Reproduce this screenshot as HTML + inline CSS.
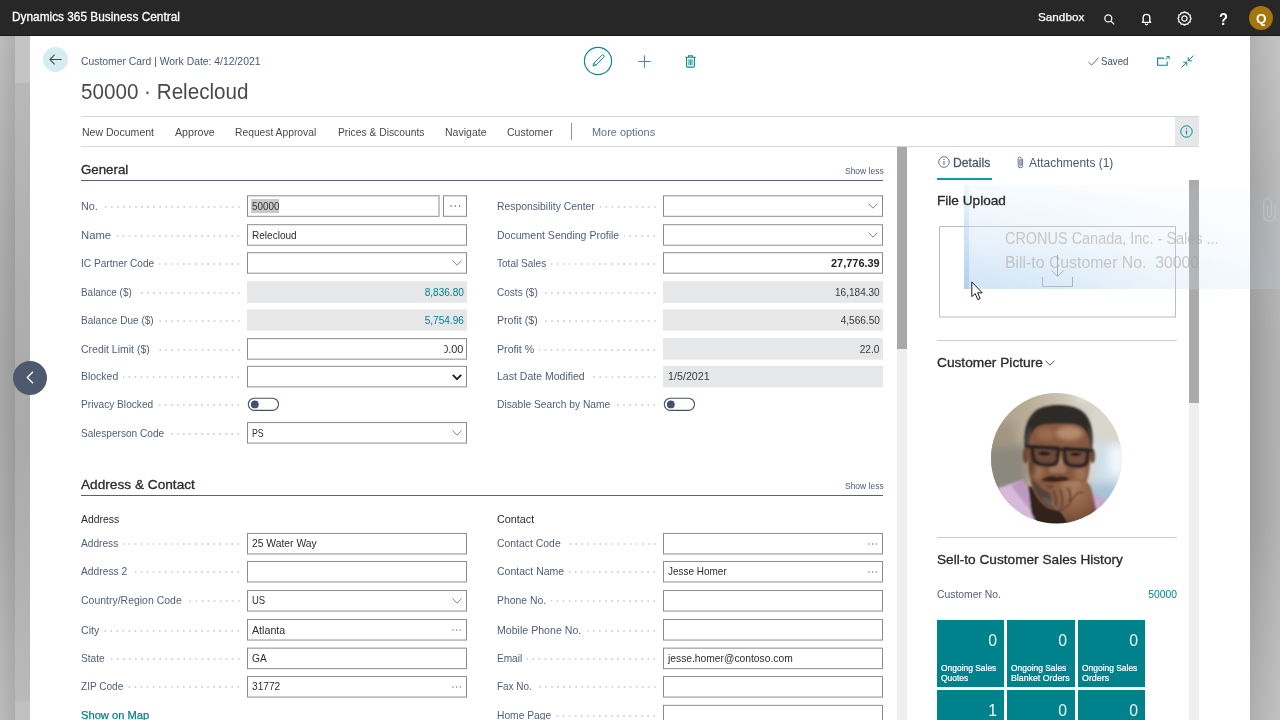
<!DOCTYPE html>
<html lang="en"><head><meta charset="utf-8"><title>Customer Card - 50000 Relecloud</title>
<style>
html,body{margin:0;padding:0}
body{width:1280px;height:720px;overflow:hidden;position:relative;background:#b0b0b0;font-family:"Liberation Sans",sans-serif}
.a{position:absolute}
.t{position:absolute;white-space:nowrap;line-height:1;transform-origin:0 0}
.bx{position:absolute;box-sizing:border-box;border:1px solid #969696;background:#fff}
.ro{position:absolute;background:#e6e7e9}
.hl{position:absolute;height:1px;background:#d4d8dd}
.sec{position:absolute;height:2px;background:#54627b}
.dots{position:absolute;height:2px;background-image:radial-gradient(circle at 1px 1px,#d0d5db 0.7px,transparent 1.05px);background-size:6.05px 2px;background-repeat:repeat-x;background-position:right top}
.tile{position:absolute;width:67px;height:67px;background:#00828d}
svg{position:absolute;overflow:visible}
</style></head><body>
<div class="a" style="left:0;top:36px;width:15px;height:684px;background:linear-gradient(90deg,rgba(255,255,255,.06),rgba(0,0,0,.05)),linear-gradient(180deg,#b8b8b8 0,#a8a8a8 28%,#a2a2a2 48%,#a5a5a5 70%,#b7b7b7 100%)"></div>
<div class="a" style="left:15px;top:36px;width:15px;height:684px;background:linear-gradient(180deg,#bababa 0,#aeaeae 40%,#aaaaaa 58%,#b2b2b2 80%,#bbbbbb 100%)"></div>
<div class="a" style="left:15px;top:36px;width:15px;height:47px;background:#c4c4c4"></div>
<div class="a" style="left:15px;top:701px;width:15px;height:19px;background:#c0c0c0"></div>
<div class="a" style="left:1250px;top:36px;width:30px;height:684px;background:linear-gradient(90deg,rgba(255,255,255,0),rgba(255,255,255,.24)),linear-gradient(180deg,#b2b2b2 0,#a2a2a2 25%,#9b9b9b 50%,#9d9d9d 72%,#afafaf 100%)"></div>
<div class="a" style="left:30px;top:36px;width:1220px;height:684px;background:#fff"></div>
<div class="a" style="left:0;top:0;width:1280px;height:36px;box-sizing:border-box;border-bottom:1px solid #1a1a1a;background:#272727"></div>
<svg style="left:1103.5px;top:13.5px" width="11" height="11" viewBox="0 0 11 11" fill="none" stroke="#fff" stroke-width="1.25"><circle cx="4.3" cy="4.4" r="3.5"/><path d="M6.9 7.1 L10.2 10.4"/></svg>
<svg style="left:1141px;top:12.8px" width="11" height="12" viewBox="0 0 11 12" fill="none" stroke="#fff" stroke-width="1.35" stroke-linejoin="round"><path d="M2.2 8.6 V4.6 a3.3 3.3 0 0 1 6.6 0 V8.6 l0.9 0.7 H1.3 Z"/><path d="M4.3 10.6 a1.2 1.2 0 0 0 2.4 0" stroke-width="1.2"/></svg>
<svg style="left:1177px;top:11px" width="15" height="15" viewBox="-7.5 -7.5 15 15" fill="none" stroke="#fff" stroke-width="1.3"><circle r="2.6"/><path d="M0-6.6 L1.6-5.6 L3.3-5.7 L4-4 L5.7-3.3 L5.6-1.6 L6.6 0 L5.6 1.6 L5.7 3.3 L4 4 L3.3 5.7 L1.6 5.6 L0 6.6 L-1.6 5.6 L-3.3 5.7 L-4 4 L-5.7 3.3 L-5.6 1.6 L-6.6 0 L-5.6-1.6 L-5.7-3.3 L-4-4 L-3.3-5.7 L-1.6-5.6 Z" stroke-linejoin="round"/></svg>
<div class="a" style="left:1248.7px;top:5.7px;width:24.4px;height:24.4px;border-radius:50%;background:#a4770e"></div>
<div class="a" style="left:43px;top:47px;width:25px;height:25px;border-radius:50%;background:#d4edf0"></div>
<svg style="left:49px;top:54px" width="13" height="11" viewBox="0 0 13 11" fill="none" stroke="#4b4b4b" stroke-width="1.1"><path d="M12.5 5.5 H1 M5.6 0.6 L0.9 5.5 L5.6 10.4"/></svg>
<svg style="left:583px;top:46px" width="30" height="30" viewBox="0 0 30 30" fill="none" stroke="#0b8793" stroke-width="1.2"><circle cx="15" cy="15" r="13.6"/><path d="M10 20 L10.9 17.2 L18.8 9.3 a1.4 1.4 0 0 1 2 2 L12.9 19.2 Z M10.9 17.2 L12.9 19.2" stroke-width="1"/></svg>
<svg style="left:638px;top:55px" width="13" height="13" viewBox="0 0 13 13" fill="none" stroke="#2a9aa4" stroke-width="1"><path d="M6.5 0.3 V12.7 M0.3 6.5 H12.7"/></svg>
<svg style="left:685px;top:54.5px" width="11" height="13" viewBox="0 0 11 13" fill="none" stroke="#0b8793" stroke-width="1.1"><path d="M0.3 2.2 H10.7 M3.6 2 V0.8 H7.4 V2 M1.6 2.4 V11.2 a0.9 0.9 0 0 0 0.9 0.9 H8.5 a0.9 0.9 0 0 0 0.9 -0.9 V2.4"/><path d="M4 4.3 V10.3 M5.5 4.3 V10.3 M7 4.3 V10.3" stroke-width="1.2" stroke="#3fa3ac"/></svg>
<svg style="left:1088px;top:56.5px" width="11" height="9" viewBox="0 0 11 9" fill="none" stroke="#6a6a6a" stroke-width="1"><path d="M0.4 5 L3.6 8.2 L10.6 0.6"/></svg>
<svg style="left:1156.5px;top:55.5px" width="13" height="10" viewBox="0 0 13 10" fill="none" stroke="#0b8793" stroke-width="1.1"><path d="M7.3 2.1 H0.6 V9.3 H10.2 V5.6"/><path d="M8.6 3.6 L12 0.6 M9.4 0.5 H12.2 V3.2" stroke-width="0.9"/></svg>
<svg style="left:1180.5px;top:54.5px" width="13" height="13" viewBox="0 0 13 13" fill="none" stroke="#0b8793" stroke-width="1"><path d="M12.4 0.6 L7.4 5.6 M7.2 2.2 V5.8 H10.8 M0.6 12.4 L5.6 7.4 M2.2 7.2 H5.8 V10.8"/></svg>
<div class="hl" style="left:81px;top:116px;width:1118px"></div>
<div class="hl" style="left:81px;top:146px;width:1118px"></div>
<div class="a" style="left:1175px;top:117px;width:24px;height:29px;background:#e5e7e9"></div>
<svg style="left:1180px;top:125px" width="13" height="13" viewBox="0 0 13 13" fill="none" stroke="#0b8793" stroke-width="1"><circle cx="6.5" cy="6.5" r="5.7"/><path d="M6.5 5.4 V9.6 M6.5 3.2 V4.3" stroke-width="1.1"/></svg>
<div class="a" style="left:571px;top:123px;width:1px;height:17px;background:#8a95a6"></div>
<div class="a" style="left:897px;top:147px;width:10px;height:573px;background:#efefef"></div>
<div class="a" style="left:897px;top:147px;width:10px;height:202px;background:#a8a8a8"></div>
<div class="a" style="left:1189px;top:180px;width:10px;height:540px;background:#efefef"></div>
<div class="a" style="left:1189px;top:180px;width:10px;height:223px;background:#ababab"></div>
<svg style="left:0;top:0" width="1280" height="720" viewBox="0 0 1280 720"><rect x="247.50" y="195.80" width="191.50" height="20.50" fill="#fff" stroke="#8c8c8c"/><rect x="443.50" y="195.80" width="23.00" height="20.50" fill="#fff" stroke="#8c8c8c"/><rect x="247.50" y="224.70" width="219.00" height="20.50" fill="#fff" stroke="#8c8c8c"/><rect x="247.50" y="252.70" width="219.00" height="20.50" fill="#fff" stroke="#8c8c8c"/><rect x="247.00" y="281.30" width="220.00" height="21.50" fill="#e6e7e9"/><rect x="247.00" y="309.25" width="220.00" height="21.50" fill="#e6e7e9"/><rect x="247.50" y="338.65" width="219.00" height="20.50" fill="#fff" stroke="#8c8c8c"/><rect x="247.50" y="366.35" width="219.00" height="20.50" fill="#fff" stroke="#8c8c8c"/><rect x="248.30" y="398.20" width="30.2" height="12.2" rx="6.1" fill="#fff" stroke="#44526b" stroke-width="1.1"/><circle cx="254.8" cy="404.40" r="3.9" fill="#44526b"/><rect x="247.50" y="422.60" width="219.00" height="20.50" fill="#fff" stroke="#8c8c8c"/><rect x="663.50" y="195.80" width="219.00" height="20.50" fill="#fff" stroke="#8c8c8c"/><rect x="663.50" y="224.70" width="219.00" height="20.50" fill="#fff" stroke="#8c8c8c"/><rect x="663.50" y="252.70" width="219.00" height="20.50" fill="#fff" stroke="#8c8c8c"/><rect x="663.00" y="281.30" width="220.00" height="21.50" fill="#e6e7e9"/><rect x="663.00" y="309.25" width="220.00" height="21.50" fill="#e6e7e9"/><rect x="663.00" y="338.15" width="220.00" height="21.50" fill="#e6e7e9"/><rect x="663.00" y="365.85" width="220.00" height="21.50" fill="#e6e7e9"/><rect x="664.30" y="398.20" width="30.2" height="12.2" rx="6.1" fill="#fff" stroke="#44526b" stroke-width="1.1"/><circle cx="670.8" cy="404.40" r="3.9" fill="#44526b"/><rect x="247.50" y="533.45" width="219.00" height="20.50" fill="#fff" stroke="#8c8c8c"/><rect x="247.50" y="561.45" width="219.00" height="20.50" fill="#fff" stroke="#8c8c8c"/><rect x="247.50" y="590.55" width="219.00" height="20.50" fill="#fff" stroke="#8c8c8c"/><rect x="247.50" y="619.55" width="219.00" height="20.50" fill="#fff" stroke="#8c8c8c"/><rect x="247.50" y="648.15" width="219.00" height="20.50" fill="#fff" stroke="#8c8c8c"/><rect x="247.50" y="676.55" width="219.00" height="20.50" fill="#fff" stroke="#8c8c8c"/><rect x="663.50" y="533.45" width="219.00" height="20.50" fill="#fff" stroke="#8c8c8c"/><rect x="663.50" y="561.45" width="219.00" height="20.50" fill="#fff" stroke="#8c8c8c"/><rect x="663.50" y="590.55" width="219.00" height="20.50" fill="#fff" stroke="#8c8c8c"/><rect x="663.50" y="619.55" width="219.00" height="20.50" fill="#fff" stroke="#8c8c8c"/><rect x="663.50" y="648.15" width="219.00" height="20.50" fill="#fff" stroke="#8c8c8c"/><rect x="663.50" y="676.55" width="219.00" height="20.50" fill="#fff" stroke="#8c8c8c"/><rect x="663.50" y="705.35" width="219.00" height="20.50" fill="#fff" stroke="#8c8c8c"/><rect x="939.50" y="226.50" width="236.00" height="90.50" fill="#fff" stroke="#bdbdbd"/></svg>
<div class="sec" style="left:81px;top:179.8px;width:802px;height:1.5px"></div>
<div class="dots" style="left:102.5px;top:206px;width:140.9px"></div>
<svg style="left:449.6px;top:205.45px" width="10" height="2" viewBox="0 0 10 2" fill="#555"><circle cx="1" cy="1" r="0.8"/><circle cx="5.3" cy="1" r="0.8"/><circle cx="9.6" cy="1" r="0.8"/></svg>
<div class="a" style="left:251.2px;top:199.05px;width:28.3px;height:13.6px;background:#c9c9c9"></div>
<div class="dots" style="left:115.9px;top:235px;width:127.5px"></div>
<div class="dots" style="left:159.0px;top:263px;width:84.4px"></div>
<svg style="left:452px;top:260.25px" width="10" height="6" viewBox="0 0 10 6" fill="none" stroke="#838383" stroke-width="1"><path d="M0.5 0.6 L5 5.2 L9.5 0.6"/></svg>
<div class="dots" style="left:136.5px;top:292px;width:106.9px"></div>
<div class="dots" style="left:158.5px;top:320px;width:84.9px"></div>
<div class="dots" style="left:154.5px;top:349px;width:88.9px"></div>
<div class="dots" style="left:123.0px;top:376px;width:120.4px"></div>
<svg style="left:452px;top:374.00px" width="10" height="7" viewBox="0 0 10 7" fill="none" stroke="#222" stroke-width="1.9"><path d="M0.8 0.9 L5 5.2 L9.2 0.9"/></svg>
<div class="dots" style="left:158.0px;top:404px;width:85.4px"></div>
<div class="dots" style="left:169.0px;top:433px;width:74.4px"></div>
<svg style="left:452px;top:430.15px" width="10" height="6" viewBox="0 0 10 6" fill="none" stroke="#838383" stroke-width="1"><path d="M0.5 0.6 L5 5.2 L9.5 0.6"/></svg>
<div class="dots" style="left:599.5px;top:206px;width:59.9px"></div>
<svg style="left:868px;top:203.35px" width="10" height="6" viewBox="0 0 10 6" fill="none" stroke="#838383" stroke-width="1"><path d="M0.5 0.6 L5 5.2 L9.5 0.6"/></svg>
<div class="dots" style="left:624.0px;top:235px;width:35.4px"></div>
<svg style="left:868px;top:232.25px" width="10" height="6" viewBox="0 0 10 6" fill="none" stroke="#838383" stroke-width="1"><path d="M0.5 0.6 L5 5.2 L9.5 0.6"/></svg>
<div class="dots" style="left:551.0px;top:263px;width:108.4px"></div>
<div class="dots" style="left:542.5px;top:292px;width:116.9px"></div>
<div class="dots" style="left:542.5px;top:320px;width:116.9px"></div>
<div class="dots" style="left:539.0px;top:349px;width:120.4px"></div>
<div class="dots" style="left:589.5px;top:376px;width:69.9px"></div>
<div class="dots" style="left:615.0px;top:404px;width:44.4px"></div>
<div class="sec" style="left:81px;top:494.8px;width:802px;height:1.5px"></div>
<div class="dots" style="left:123.0px;top:543px;width:120.4px"></div>
<div class="dots" style="left:132.0px;top:571px;width:111.4px"></div>
<div class="dots" style="left:186.5px;top:600px;width:56.9px"></div>
<svg style="left:452px;top:598.10px" width="10" height="6" viewBox="0 0 10 6" fill="none" stroke="#838383" stroke-width="1"><path d="M0.5 0.6 L5 5.2 L9.5 0.6"/></svg>
<div class="dots" style="left:104.0px;top:630px;width:139.4px"></div>
<svg style="left:451.5px;top:629.40px" width="10" height="2" viewBox="0 0 10 2" fill="#7a7a7a"><circle cx="1" cy="1" r="0.75"/><circle cx="4.6" cy="1" r="0.75"/><circle cx="8.2" cy="1" r="0.75"/></svg>
<div class="dots" style="left:109.5px;top:658px;width:133.9px"></div>
<div class="dots" style="left:128.0px;top:686px;width:115.4px"></div>
<svg style="left:451.5px;top:686.40px" width="10" height="2" viewBox="0 0 10 2" fill="#7a7a7a"><circle cx="1" cy="1" r="0.75"/><circle cx="4.6" cy="1" r="0.75"/><circle cx="8.2" cy="1" r="0.75"/></svg>
<div class="dots" style="left:565.5px;top:543px;width:93.9px"></div>
<svg style="left:867.5px;top:543.30px" width="10" height="2" viewBox="0 0 10 2" fill="#7a7a7a"><circle cx="1" cy="1" r="0.75"/><circle cx="4.6" cy="1" r="0.75"/><circle cx="8.2" cy="1" r="0.75"/></svg>
<div class="dots" style="left:569.0px;top:571px;width:90.4px"></div>
<svg style="left:867.5px;top:571.30px" width="10" height="2" viewBox="0 0 10 2" fill="#7a7a7a"><circle cx="1" cy="1" r="0.75"/><circle cx="4.6" cy="1" r="0.75"/><circle cx="8.2" cy="1" r="0.75"/></svg>
<div class="dots" style="left:551.0px;top:600px;width:108.4px"></div>
<div class="dots" style="left:586.0px;top:630px;width:73.4px"></div>
<div class="dots" style="left:527.0px;top:658px;width:132.4px"></div>
<div class="dots" style="left:536.5px;top:686px;width:122.9px"></div>
<div class="dots" style="left:556.0px;top:715px;width:103.4px"></div>
<svg style="left:937.5px;top:155.5px" width="12" height="12" viewBox="0 0 12 12" fill="none" stroke="#5a6578" stroke-width="0.9"><circle cx="6" cy="6" r="5.3"/><path d="M6 5 V9 M6 3 V4" stroke-width="1"/></svg>
<div class="a" style="left:937px;top:177.6px;width:55px;height:2.2px;background:#0f9aa6"></div>
<svg style="left:1016.7px;top:155.5px" width="7" height="13" viewBox="0 0 7 13" fill="none" stroke="#6a7488" stroke-width="1"><path d="M5.6 3 V9.6 a2.2 2.2 0 0 1 -4.4 0 V2.6 a1.5 1.5 0 0 1 3 0 V9.2 a0.7 0.7 0 0 1 -1.4 0 V3.4"/></svg>
<svg style="left:1041.5px;top:255px" width="31" height="33" viewBox="0 0 31 33" fill="none" stroke="#8b8b8b" stroke-width="1"><path d="M15.5 0 V21 M9.5 15.5 L15.5 21.5 L21.5 15.5 M0.5 22 V31.5 H30.5 V22"/></svg>
<div class="hl" style="left:937px;top:340px;width:240px;background:#c9ced6"></div>
<svg style="left:1044.5px;top:359.5px" width="10" height="6" viewBox="0 0 10 6" fill="none" stroke="#555" stroke-width="1"><path d="M0.5 0.6 L5 5.2 L9.5 0.6"/></svg>
<svg style="left:991px;top:393px" width="130.6" height="130.6" viewBox="0 0 130 130">
<defs>
<clipPath id="pc"><circle cx="65" cy="65" r="65"/></clipPath>
<filter id="b1" x="-20%" y="-20%" width="140%" height="140%"><feGaussianBlur stdDeviation="0.9"/></filter>
<filter id="b2" x="-30%" y="-30%" width="160%" height="160%"><feGaussianBlur stdDeviation="2.2"/></filter>
<filter id="b3" x="-30%" y="-30%" width="160%" height="160%"><feGaussianBlur stdDeviation="5"/></filter>
<linearGradient id="bg" x1="0" y1="0" x2="1" y2="0"><stop offset="0" stop-color="#ab9d88"/><stop offset="0.3" stop-color="#bbae99"/><stop offset="0.6" stop-color="#d0c8b9"/><stop offset="0.85" stop-color="#d6d4cb"/><stop offset="1" stop-color="#cfd3d0"/></linearGradient>
<radialGradient id="hd" cx="0.5" cy="0.25" r="0.85"><stop offset="0" stop-color="#a67b5d"/><stop offset="0.55" stop-color="#875b41"/><stop offset="1" stop-color="#5c3c2c"/></radialGradient>
</defs>
<g clip-path="url(#pc)">
<rect width="130" height="130" fill="url(#bg)"/>
<g filter="url(#b3)">
<rect x="-6" y="52" width="42" height="46" fill="#8b887d"/>
<rect x="-6" y="30" width="30" height="24" fill="#a29683"/>
<rect x="98" y="14" width="40" height="40" fill="#d8d6cd"/>
<rect x="102" y="50" width="34" height="52" fill="#cfe0ea"/>
<rect x="118" y="52" width="16" height="30" fill="#f2f9fd"/>
<rect x="96" y="90" width="30" height="18" fill="#a6c2d5"/>
<rect x="84" y="-4" width="22" height="11" fill="#eeece4"/>
<rect x="100" y="108" width="30" height="24" fill="#b7c0c8"/>
</g>
<g filter="url(#b1)">
<!-- shirt -->
<path d="M4 96 L32 86 L37 96 L40 119 L46 132 L0 132 Z" fill="#d8b9da"/>
<path d="M20 92 L32 86 L37 96 L39 116 C32 108 26 100 20 92 Z" fill="#bb9ac1"/>
<path d="M100 99 L114 106 L116 128 L92 132 Z" fill="#c8a7ce"/>
<!-- neck -->
<path d="M37 92 L62 104 L80 132 L46 132 L40 119 Z" fill="#33241d"/>
<!-- hair -->
<path d="M34.5 58 C31 40 35 24 46 16.5 C56 10.5 78 10 89 17 C100 24 103 40 100.5 58 L96 60 L40 60 Z" fill="#2d2926"/>
<path d="M35 56 C34 46 36 38 40 32 C39 40 39 48 39.5 56 Z" fill="#4a4541"/>
<path d="M100 57 C101.5 47 100 38 96 31 C97 40 97 48 96 57 Z" fill="#45403c"/>
<!-- ears -->
<ellipse cx="34.5" cy="62" rx="3" ry="8" fill="#6d4a36"/>
<ellipse cx="101" cy="63" rx="2.6" ry="7" fill="#6d4a36"/>
<!-- face base -->
<path d="M37.5 54 C38 42 42 34.5 50 32 C58 30 78 30 86 32 C94 34.5 98 42 98.5 55 C100 74 96 92 88 102 C80 112 72 116 64 116 C56 116 47 108 42 96 C38 86 37 70 37.5 54 Z" fill="#86593f"/>
</g>
<g filter="url(#b2)">
<ellipse cx="78" cy="40" rx="13" ry="7" fill="#b48b6c"/>
<ellipse cx="55" cy="41" rx="9" ry="6" fill="#996c50"/>
<ellipse cx="46" cy="79" rx="6" ry="7" fill="#9b6f53"/>
<ellipse cx="89" cy="80" rx="6" ry="8" fill="#9d7155"/>
<ellipse cx="67" cy="71" rx="4.5" ry="8" fill="#b78d6e"/>
<ellipse cx="41" cy="70" rx="3" ry="14" fill="#63412f"/>
</g>
<g filter="url(#b1)">
<!-- beard -->
<path d="M40 84 C42 98 50 112 63 116 C72 118 82 110 88 100 C80 104 72 105 64 102 C54 98 46 92 40 84 Z" fill="#54433a"/>
<path d="M50 103 C53 109 57 113 62 115 L63 106 C58 105.5 54 104.5 50 103 Z" fill="#64574f"/>
<!-- moustache + mouth -->
<path d="M50 87 C56 82 62 82 66 84 C70 82 75 83 79 87 C72 88.5 58 89 50 87 Z" fill="#33231d"/>
<path d="M54 92 C60 96 70 96 76 91.5 C70 92.5 60 93 54 92 Z" fill="#5a332c"/>
<!-- nose -->
<path d="M57.5 77 C58 73 61 71 66 71 C71 71 74.5 73 75 77 C75 80 71 81.5 66 81.5 C61 81.5 57.5 80 57.5 77 Z" fill="#a0745a"/>
<path d="M57 79 C60 82.5 72 82.5 75.5 79 C72 81 60 81 57 79 Z" fill="#4a2f24"/>
<!-- eye sockets -->
<rect x="41.5" y="55" width="24" height="15" rx="3" fill="#6d4a37"/>
<rect x="74" y="56" width="21" height="15" rx="3" fill="#72503b"/>
<path d="M46 60 C50 57.5 56 57.5 60 60.5 C56 63 50 63 46 60 Z" fill="#241915"/>
<path d="M78 61 C81.5 58.5 87 58.5 90.5 61 C87 63.5 81.5 63.5 78 61 Z" fill="#241915"/>
</g>
<!-- glasses -->
<g fill="none" stroke="#262120" stroke-width="3.3" filter="url(#b1)" stroke-linejoin="round">
<path d="M40.5 53.5 L67 55 L66 67 C65.5 71 62 72 54 71.5 C46 71 43 69 42.2 65 Z"/>
<path d="M73 55.5 L96.5 57 L95.5 68 C95 72 91 73 84.5 72.6 C77.5 72.2 74.2 70.5 73.8 66.5 Z"/>
<path d="M67 57 C69 55.6 71.5 55.6 73 57.4" stroke-width="2.6"/>
<path d="M40.5 54 L34 52 M96.5 58 L101.5 57" stroke-width="2.4"/>
</g>
<g filter="url(#b1)">
<!-- hand -->
<path d="M59.5 103 C58 96 61 90.5 68 88.5 L83 86 C92 85 98 88 100 96 L104.5 116 C106 124 101 132 92 132 L76 132 C75 126 73 121 67 117 C62 113.5 60.5 108 59.5 103 Z" fill="url(#hd)"/>
<path d="M62 97 C64.5 102 66 108 64 113 M68.5 96 C71.5 102 72 108 70 113.5 M76 94 C79.5 98 80 104 77.5 108" stroke="#56372a" stroke-width="1.7" fill="none"/>
<path d="M66 117 C72 116 78 112 81 106 C84 100 88 98 92 99" stroke="#5f3f2f" stroke-width="1.5" fill="none"/>
<path d="M60.8 108 C61.8 112 63.5 114.5 66.5 116" stroke="#a58570" stroke-width="1" fill="none"/>
<ellipse cx="80" cy="91" rx="10" ry="3" fill="#a98062" opacity=".7"/>
</g>
</g>
</svg>
<div class="hl" style="left:937px;top:537px;width:240px;background:#c9ced6"></div>
<div class="tile" style="left:937px;top:620px;width:67px"></div>
<div class="tile" style="left:937px;top:690px;height:30px;width:67px"></div>
<div class="tile" style="left:1007px;top:620px;width:68px"></div>
<div class="tile" style="left:1007px;top:690px;height:30px;width:68px"></div>
<div class="tile" style="left:1078px;top:620px;width:67px"></div>
<div class="tile" style="left:1078px;top:690px;height:30px;width:67px"></div>
<div class="a" style="left:964px;top:185px;width:316px;height:104px;background:linear-gradient(180deg,rgba(205,226,246,0.14),rgba(202,225,246,0.45) 55%,rgba(194,220,244,0.8));-webkit-mask-image:linear-gradient(90deg,#000 0%,rgba(0,0,0,.8) 25%,rgba(0,0,0,.5) 55%,rgba(0,0,0,.3) 80%,rgba(0,0,0,.22) 100%);mask-image:linear-gradient(90deg,#000 0%,rgba(0,0,0,.8) 25%,rgba(0,0,0,.5) 55%,rgba(0,0,0,.3) 80%,rgba(0,0,0,.22) 100%)"></div>
<div class="a" style="left:964px;top:185px;width:4.5px;height:104px;background:linear-gradient(180deg,rgba(160,200,238,0.1),rgba(150,195,236,0.55))"></div>
<svg style="left:1263px;top:197.5px" width="13" height="24" viewBox="0 0 13 24" fill="none" stroke="rgba(225,225,225,0.3)" stroke-width="1.3"><path d="M12 7 V17.5 a5.6 5.6 0 0 1 -11.2 0 V4.6 a3.8 3.8 0 0 1 7.6 0 V17 a1.9 1.9 0 0 1 -3.8 0 V7.5"/></svg>
<svg style="left:970.5px;top:280.5px" width="13" height="20" viewBox="0 0 13 20"><path d="M0.8 0.9 V15.6 L4.2 12.6 L6.8 18.6 L9.2 17.6 L6.6 11.8 H11.2 Z" fill="#fff" stroke="#1c1c1c" stroke-width="1"/></svg>
<div class="a" style="left:13px;top:361px;width:34px;height:34px;border-radius:50%;background:#4d596d"></div>
<svg style="left:25.5px;top:371.2px" width="8" height="13" viewBox="0 0 8 13" fill="none" stroke="#fff" stroke-width="1.3"><path d="M7 0.8 L1.3 6.5 L7 12.2"/></svg>
<div class="t" id="t0" style="top:10.97px;font-size:12.2px;color:#fff;transform:scaleX(0.9717);-webkit-text-stroke:0.29px;left:11.51px;">Dynamics 365 Business Central</div>
<div class="t" id="t1" style="top:11.18px;font-size:11.6px;color:#fff;transform:scaleX(1.0113);left:1037.54px;-webkit-text-stroke:0.25px;">Sandbox</div>
<div class="t" id="t2" style="top:10.63px;font-size:16.5px;color:#fff;transform:scaleX(0.8852);font-weight:700;left:1219.34px;">?</div>
<div class="t" id="t3" style="top:12.37px;font-size:13.5px;color:#fff;transform:scaleX(1.0013);font-weight:700;left:1255.66px;">Q</div>
<div class="t" id="t4" style="top:55.77px;font-size:10.9px;color:#4a5a76;transform:scaleX(0.9521);left:80.86px;">Customer Card | Work Date: 4/12/2021</div>
<div class="t" id="t5" style="top:81.18px;font-size:22px;color:#4a4a4a;transform:scaleX(0.9380);left:80.62px;">50000 · Relecloud</div>
<div class="t" id="t6" style="top:55.80px;font-size:10.75px;color:#3f4d66;transform:scaleX(0.9001);left:1100.87px;">Saved</div>
<div class="t" id="t7" style="top:126.90px;font-size:10.75px;color:#454a52;transform:scaleX(0.9801);left:82.07px;">New Document</div>
<div class="t" id="t8" style="top:126.90px;font-size:10.75px;color:#454a52;transform:scaleX(0.9923);left:174.57px;">Approve</div>
<div class="t" id="t9" style="top:126.90px;font-size:10.75px;color:#454a52;transform:scaleX(0.9572);left:235.07px;">Request Approval</div>
<div class="t" id="t10" style="top:126.90px;font-size:10.75px;color:#454a52;transform:scaleX(0.9581);left:337.87px;">Prices &amp; Discounts</div>
<div class="t" id="t11" style="top:126.90px;font-size:10.75px;color:#454a52;transform:scaleX(0.9788);left:444.67px;">Navigate</div>
<div class="t" id="t12" style="top:126.90px;font-size:10.75px;color:#454a52;transform:scaleX(0.9813);left:506.57px;">Customer</div>
<div class="t" id="t13" style="top:126.90px;font-size:10.75px;color:#5f6f88;transform:scaleX(1.0158);left:591.77px;">More options</div>
<div class="t" id="t14" style="top:163.96px;font-size:12.8px;color:#2b2b2b;transform:scaleX(1.0384);-webkit-text-stroke:0.31px;left:81.09px;">General</div>
<div class="t" id="t15" style="top:167.13px;font-size:9.3px;color:#4a5a76;transform:scaleX(0.9119);left:844.63px;">Show less</div>
<div class="t" id="t16" style="top:200.86px;font-size:10.5px;color:#505e78;transform:scaleX(1.0232);left:81.18px;">No.</div>
<div class="t" id="t17" style="top:200.86px;font-size:10.5px;color:#333;transform:scaleX(0.9424);left:251.58px;">50000</div>
<div class="t" id="t18" style="top:229.76px;font-size:10.5px;color:#505e78;transform:scaleX(1.0752);left:81.18px;">Name</div>
<div class="t" id="t19" style="top:229.76px;font-size:10.5px;color:#2d2d2d;transform:scaleX(0.9576);left:251.58px;">Relecloud</div>
<div class="t" id="t20" style="top:257.76px;font-size:10.5px;color:#505e78;transform:scaleX(0.9650);left:81.18px;">IC Partner Code</div>
<div class="t" id="t21" style="top:286.86px;font-size:10.5px;color:#505e78;transform:scaleX(0.9445);left:81.18px;">Balance ($)</div>
<div class="t" id="t22" style="top:286.86px;font-size:10.5px;color:#00838f;transform:scaleX(0.9596);right:816.58px;transform-origin:100% 0;">8,836.80</div>
<div class="t" id="t23" style="top:314.81px;font-size:10.5px;color:#505e78;transform:scaleX(0.9585);left:81.18px;">Balance Due ($)</div>
<div class="t" id="t24" style="top:314.81px;font-size:10.5px;color:#00838f;transform:scaleX(0.9596);right:816.58px;transform-origin:100% 0;">5,754.96</div>
<div class="t" id="t25" style="top:343.71px;font-size:10.5px;color:#505e78;transform:scaleX(0.9980);left:81.18px;">Credit Limit ($)</div>
<div class="t" id="t26" style="top:343.71px;font-size:10.5px;color:#2d2d2d;transform:scaleX(1.0384);right:816.58px;transform-origin:100% 0;clip-path:inset(0 0 0 1.9px);">0.00</div>
<div class="t" id="t27" style="top:371.41px;font-size:10.5px;color:#505e78;transform:scaleX(0.9963);left:81.18px;">Blocked</div>
<div class="t" id="t28" style="top:399.11px;font-size:10.5px;color:#505e78;transform:scaleX(0.9668);left:81.18px;">Privacy Blocked</div>
<div class="t" id="t29" style="top:427.66px;font-size:10.5px;color:#505e78;transform:scaleX(0.9633);left:81.18px;">Salesperson Code</div>
<div class="t" id="t30" style="top:427.66px;font-size:10.5px;color:#2d2d2d;transform:scaleX(0.8364);left:251.58px;">PS</div>
<div class="t" id="t31" style="top:200.86px;font-size:10.5px;color:#505e78;transform:scaleX(0.9849);left:497.18px;">Responsibility Center</div>
<div class="t" id="t32" style="top:229.76px;font-size:10.5px;color:#505e78;transform:scaleX(1.0018);left:497.18px;">Document Sending Profile</div>
<div class="t" id="t33" style="top:257.76px;font-size:10.5px;color:#505e78;transform:scaleX(0.9581);left:497.18px;">Total Sales</div>
<div class="t" id="t34" style="top:257.76px;font-size:10.5px;color:#222;transform:scaleX(1.0429);font-weight:700;right:400.58px;transform-origin:100% 0;">27,776.39</div>
<div class="t" id="t35" style="top:286.86px;font-size:10.5px;color:#505e78;transform:scaleX(0.9561);left:497.18px;">Costs ($)</div>
<div class="t" id="t36" style="top:286.86px;font-size:10.5px;color:#3a3a3a;transform:scaleX(0.9573);right:400.58px;transform-origin:100% 0;">16,184.30</div>
<div class="t" id="t37" style="top:314.81px;font-size:10.5px;color:#505e78;transform:scaleX(1.0113);left:497.18px;">Profit ($)</div>
<div class="t" id="t38" style="top:314.81px;font-size:10.5px;color:#3a3a3a;transform:scaleX(0.9596);right:400.58px;transform-origin:100% 0;">4,566.50</div>
<div class="t" id="t39" style="top:343.71px;font-size:10.5px;color:#505e78;transform:scaleX(1.0124);left:497.18px;">Profit %</div>
<div class="t" id="t40" style="top:343.71px;font-size:10.5px;color:#3a3a3a;transform:scaleX(0.9650);right:400.58px;transform-origin:100% 0;">22.0</div>
<div class="t" id="t41" style="top:371.41px;font-size:10.5px;color:#505e78;transform:scaleX(1.0018);left:497.18px;">Last Date Modified</div>
<div class="t" id="t42" style="top:371.41px;font-size:10.5px;color:#3a3a3a;transform:scaleX(1.0207);left:667.58px;">1/5/2021</div>
<div class="t" id="t43" style="top:399.11px;font-size:10.5px;color:#505e78;transform:scaleX(0.9749);left:497.18px;">Disable Search by Name</div>
<div class="t" id="t44" style="top:479.46px;font-size:12.8px;color:#2b2b2b;transform:scaleX(1.0673);-webkit-text-stroke:0.31px;left:80.89px;">Address &amp; Contact</div>
<div class="t" id="t45" style="top:482.13px;font-size:9.3px;color:#4a5a76;transform:scaleX(0.9119);left:844.63px;">Show less</div>
<div class="t" id="t46" style="top:514.11px;font-size:10.5px;color:#2b2b2b;transform:scaleX(0.9920);left:81.08px;">Address</div>
<div class="t" id="t47" style="top:514.11px;font-size:10.5px;color:#2b2b2b;transform:scaleX(1.0286);left:497.08px;">Contact</div>
<div class="t" id="t48" style="top:537.51px;font-size:10.5px;color:#505e78;transform:scaleX(0.9660);left:81.18px;">Address</div>
<div class="t" id="t49" style="top:537.51px;font-size:10.5px;color:#2d2d2d;transform:scaleX(0.9844);left:251.58px;">25 Water Way</div>
<div class="t" id="t50" style="top:565.51px;font-size:10.5px;color:#505e78;transform:scaleX(0.9776);left:81.18px;">Address 2</div>
<div class="t" id="t51" style="top:594.61px;font-size:10.5px;color:#505e78;transform:scaleX(0.9974);left:81.18px;">Country/Region Code</div>
<div class="t" id="t52" style="top:594.61px;font-size:10.5px;color:#2d2d2d;transform:scaleX(0.9060);left:251.58px;">US</div>
<div class="t" id="t53" style="top:624.61px;font-size:10.5px;color:#505e78;transform:scaleX(1.0071);left:81.18px;">City</div>
<div class="t" id="t54" style="top:624.61px;font-size:10.5px;color:#2d2d2d;transform:scaleX(1.0159);left:251.58px;">Atlanta</div>
<div class="t" id="t55" style="top:653.21px;font-size:10.5px;color:#505e78;transform:scaleX(0.9670);left:81.18px;">State</div>
<div class="t" id="t56" style="top:653.21px;font-size:10.5px;color:#2d2d2d;transform:scaleX(0.9704);left:251.58px;">GA</div>
<div class="t" id="t57" style="top:680.61px;font-size:10.5px;color:#505e78;transform:scaleX(0.9559);left:81.18px;">ZIP Code</div>
<div class="t" id="t58" style="top:680.61px;font-size:10.5px;color:#2d2d2d;transform:scaleX(0.9664);left:251.58px;">31772</div>
<div class="t" id="t59" style="top:710.31px;font-size:10.5px;color:#0b7f8a;transform:scaleX(1.0623);-webkit-text-stroke:0.25px;left:80.88px;">Show on Map</div>
<div class="t" id="t60" style="top:537.51px;font-size:10.5px;color:#505e78;transform:scaleX(0.9923);left:497.18px;">Contact Code</div>
<div class="t" id="t61" style="top:565.51px;font-size:10.5px;color:#505e78;transform:scaleX(1.0015);left:497.18px;">Contact Name</div>
<div class="t" id="t62" style="top:565.51px;font-size:10.5px;color:#2d2d2d;transform:scaleX(0.9493);left:667.58px;">Jesse Homer</div>
<div class="t" id="t63" style="top:594.61px;font-size:10.5px;color:#505e78;transform:scaleX(0.9919);left:497.18px;">Phone No.</div>
<div class="t" id="t64" style="top:624.61px;font-size:10.5px;color:#505e78;transform:scaleX(1.0090);left:497.18px;">Mobile Phone No.</div>
<div class="t" id="t65" style="top:653.21px;font-size:10.5px;color:#505e78;transform:scaleX(0.9603);left:497.18px;">Email</div>
<div class="t" id="t66" style="top:653.21px;font-size:10.5px;color:#2d2d2d;transform:scaleX(0.9791);left:667.58px;">jesse.homer@contoso.com</div>
<div class="t" id="t67" style="top:680.61px;font-size:10.5px;color:#505e78;transform:scaleX(0.9444);left:497.18px;">Fax No.</div>
<div class="t" id="t68" style="top:710.41px;font-size:10.5px;color:#505e78;transform:scaleX(0.9778);left:497.18px;">Home Page</div>
<div class="t" id="t69" style="top:156.83px;font-size:12.01px;color:#4a5872;transform:scaleX(1.0147);-webkit-text-stroke:0.29px;left:953.22px;">Details</div>
<div class="t" id="t70" style="top:156.83px;font-size:12.01px;color:#4a5872;transform:scaleX(0.9956);left:1028.52px;">Attachments (1)</div>
<div class="t" id="t71" style="top:194.86px;font-size:12.8px;color:#2b2b2b;transform:scaleX(1.0641);-webkit-text-stroke:0.31px;left:936.79px;">File Upload</div>
<div class="t" id="t72" style="top:356.86px;font-size:12.8px;color:#2b2b2b;transform:scaleX(1.0710);-webkit-text-stroke:0.31px;left:936.79px;">Customer Picture</div>
<div class="t" id="t73" style="top:554.46px;font-size:12.8px;color:#2b2b2b;transform:scaleX(1.0668);-webkit-text-stroke:0.31px;left:936.79px;">Sell-to Customer Sales History</div>
<div class="t" id="t74" style="top:588.90px;font-size:10.75px;color:#566074;transform:scaleX(0.9642);left:936.87px;">Customer No.</div>
<div class="t" id="t75" style="top:588.90px;font-size:10.75px;color:#00838f;transform:scaleX(0.9610);right:102.77px;transform-origin:100% 0;">50000</div>
<div class="t" id="t76" style="top:631.80px;font-size:16.3px;color:#eef8f9;transform:scaleX(0.9700);right:282.85px;transform-origin:100% 0;">0</div>
<div class="t" id="t77" style="top:701.80px;font-size:16.3px;color:#eef8f9;transform:scaleX(0.9700);right:282.85px;transform-origin:100% 0;">1</div>
<div class="t" id="t78" style="top:663.68px;font-size:9px;color:#fff;transform:scaleX(0.9369);-webkit-text-stroke:0.22px;left:940.74px;">Ongoing Sales</div>
<div class="t" id="t79" style="top:674.38px;font-size:9px;color:#fff;transform:scaleX(0.9410);-webkit-text-stroke:0.22px;left:940.74px;">Quotes</div>
<div class="t" id="t80" style="top:631.80px;font-size:16.3px;color:#eef8f9;transform:scaleX(0.9700);right:212.85px;transform-origin:100% 0;">0</div>
<div class="t" id="t81" style="top:701.80px;font-size:16.3px;color:#eef8f9;transform:scaleX(0.9700);right:212.85px;transform-origin:100% 0;">0</div>
<div class="t" id="t82" style="top:663.68px;font-size:9px;color:#fff;transform:scaleX(0.9369);-webkit-text-stroke:0.22px;left:1010.74px;">Ongoing Sales</div>
<div class="t" id="t83" style="top:674.38px;font-size:9px;color:#fff;transform:scaleX(0.9765);-webkit-text-stroke:0.22px;left:1010.74px;">Blanket Orders</div>
<div class="t" id="t84" style="top:631.80px;font-size:16.3px;color:#eef8f9;transform:scaleX(0.9700);right:141.85px;transform-origin:100% 0;">0</div>
<div class="t" id="t85" style="top:701.80px;font-size:16.3px;color:#eef8f9;transform:scaleX(0.9700);right:141.85px;transform-origin:100% 0;">0</div>
<div class="t" id="t86" style="top:663.68px;font-size:9px;color:#fff;transform:scaleX(0.9369);-webkit-text-stroke:0.22px;left:1081.74px;">Ongoing Sales</div>
<div class="t" id="t87" style="top:674.38px;font-size:9px;color:#fff;transform:scaleX(0.9856);-webkit-text-stroke:0.22px;left:1081.74px;">Orders</div>
<div class="t" id="t88" style="top:230.96px;font-size:16px;color:rgba(168,160,152,0.54);transform:scaleX(0.9031);left:1004.66px;">CRONUS Canada, Inc. - Sales ...</div>
<div class="t" id="t89" style="top:255.06px;font-size:16px;color:rgba(168,160,152,0.54);transform:scaleX(0.9876);left:1004.66px;">Bill-to Customer No. &nbsp;30000</div>
</body></html>
